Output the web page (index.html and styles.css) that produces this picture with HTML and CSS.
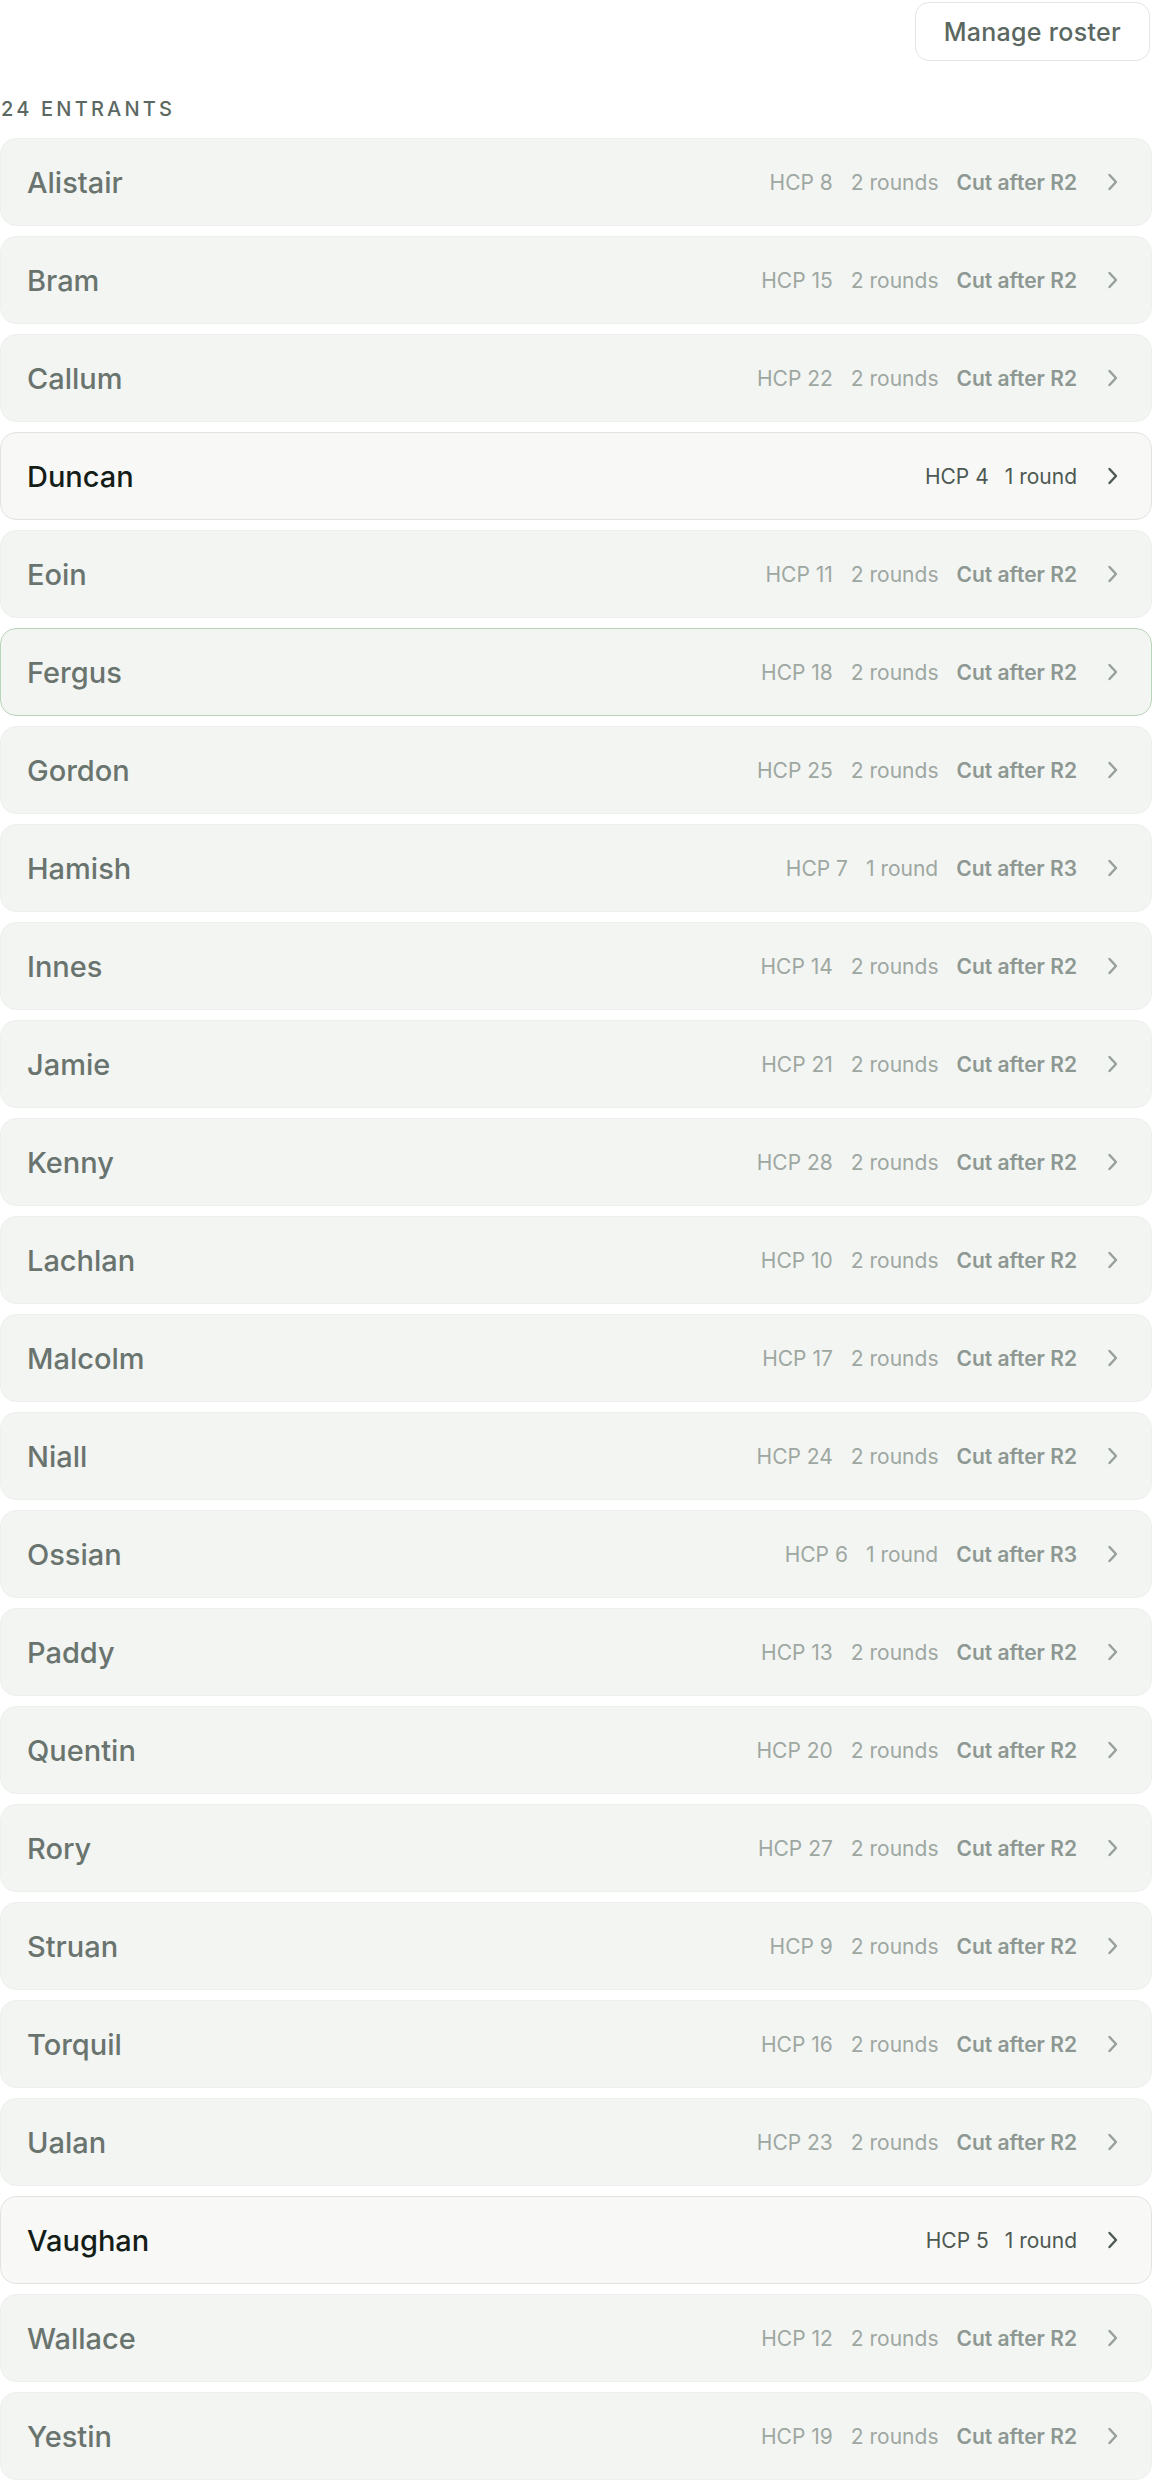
FILE: index.html
```html
<!DOCTYPE html>
<html>
<head>
	<title>Entrants</title>
	<link rel="stylesheet" href="styles.css">
</head>
<body>

<div id="toolbar">
	<button id="manage">Manage roster</button>
</div>

<h2 id="count">24 ENTRANTS</h2>

<div id="list"></div>

<script type="text/javascript">

var players = [
	["Alistair", 8, 2, "R2"],
	["Bram", 15, 2, "R2"],
	["Callum", 22, 2, "R2"],
	["Duncan", 4, 1, ""],
	["Eoin", 11, 2, "R2"],
	["Fergus", 18, 2, "R2"],
	["Gordon", 25, 2, "R2"],
	["Hamish", 7, 1, "R3"],
	["Innes", 14, 2, "R2"],
	["Jamie", 21, 2, "R2"],
	["Kenny", 28, 2, "R2"],
	["Lachlan", 10, 2, "R2"],
	["Malcolm", 17, 2, "R2"],
	["Niall", 24, 2, "R2"],
	["Ossian", 6, 1, "R3"],
	["Paddy", 13, 2, "R2"],
	["Quentin", 20, 2, "R2"],
	["Rory", 27, 2, "R2"],
	["Struan", 9, 2, "R2"],
	["Torquil", 16, 2, "R2"],
	["Ualan", 23, 2, "R2"],
	["Vaughan", 5, 1, ""],
	["Wallace", 12, 2, "R2"],
	["Yestin", 19, 2, "R2"]
];

var chevron = '<svg class="chev" width="24" height="24" viewBox="0 0 24 24"><path d="M8.5 5 L15 12 L8.5 19" fill="none" stroke="currentColor" stroke-width="2.4" stroke-linecap="round" stroke-linejoin="round"/></svg>';

var list = document.querySelector("#list");
for(var i=0;i<players.length;i++){
	var p = players[i];
	var row = document.createElement("div");
	row.className = "entrant";
	if(p[3] === ""){ row.classList.add("active"); }
	if(p[0] === "Fergus"){ row.classList.add("focus"); }
	var html = '<span class="name">'+p[0]+'</span><span class="meta">';
	html += '<span>HCP '+p[1]+'</span>';
	html += '<span>'+p[2]+(p[2]==1 ? ' round' : ' rounds')+'</span>';
	if(p[3] !== ""){ html += '<span class="cut">Cut after '+p[3]+'</span>'; }
	html += '</span>'+chevron;
	row.innerHTML = html;
	list.appendChild(row);
}

</script>
</body>
</html>
```

FILE: styles.css
```css
body{
	background-color: #ffffff;
	margin: 0;
	font-family: "Inter", "Liberation Sans", sans-serif;
}

#toolbar{
	display: flex;
	justify-content: flex-end;
	padding: 2px 2px 0 0;
}

#manage{
	height: 59px;
	padding: 0 28px;
	border: 1.5px solid #e1e6e2;
	border-radius: 14px;
	background: #ffffff;
	color: #5b6861;
	font-family: inherit;
	font-size: 25px;
	font-weight: 500;
	letter-spacing: 0.3px;
}

#count{
	margin: 36px 0 17px 1px;
	font-size: 20px;
	line-height: 24px;
	font-weight: 500;
	letter-spacing: 3.2px;
	color: #5b6861;
}

#list{
	display: flex;
	flex-direction: column;
	gap: 10px;
}

.entrant{
	display: flex;
	align-items: center;
	height: 88px;
	box-sizing: border-box;
	padding: 0 26px 0 26px;
	background: #f3f5f3;
	border: 1.5px solid #edf0ed;
	border-radius: 16px;
}

.entrant.active{
	background: #f8f9f7;
	border-color: #e1e5e1;
}

.entrant.focus{
	border-color: #b7d5b9;
}

.name{
	flex: 1;
	font-size: 29px;
	font-weight: 500;
	color: #6a746e;
}

.active .name{
	color: #141d18;
}

.meta{
	display: flex;
	gap: 18px;
	font-size: 21px;
	color: #9ea7a1;
}

.active .meta{
	gap: 16px;
	color: #4d5852;
}

.meta .cut{
	font-weight: 600;
	color: #8e9892;
}

.chev{
	margin-left: 24px;
	color: #96a099;
}

.active .chev{
	color: #4d5852;
}
```
